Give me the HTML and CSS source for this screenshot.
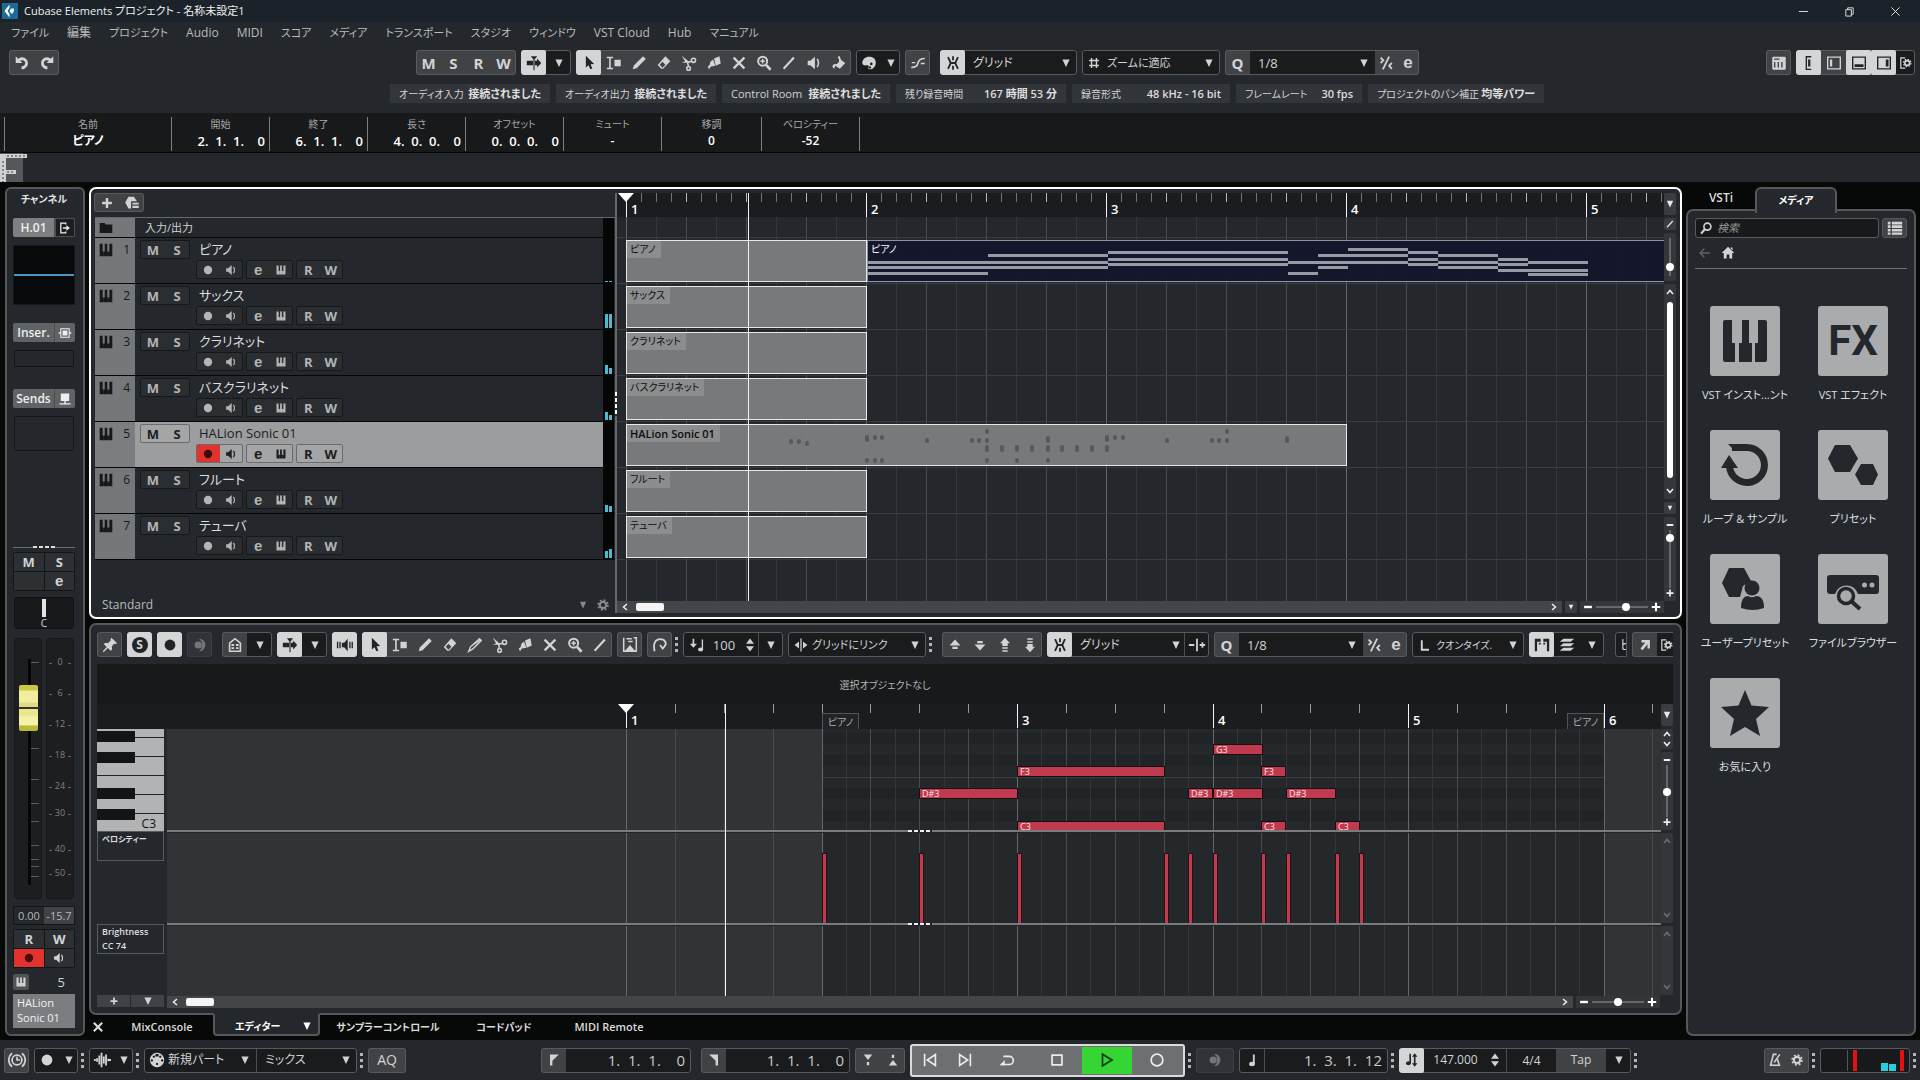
FILE: index.html
```html
<!DOCTYPE html>
<html lang="ja">
<head>
<meta charset="utf-8">
<title>Cubase Elements プロジェクト - 名称未設定1</title>
<link rel="stylesheet" href="styles.css">
</head>
<body>
<svg class="defs" aria-hidden="true">
  <symbol id="undo" viewBox="0 0 20 20"><path d="M3 2.500v7.500h7.500L8 7.600a3.400 3.400 0 1 1 1.500 6v3.200A6.600 6.600 0 1 0 5.700 5.200z"/></symbol>
  <symbol id="redo" viewBox="0 0 20 20"><path d="M17 2.500v7.500H9.500L12 7.600a3.400 3.400 0 1 0-1.500 6v3.200a6.600 6.600 0 1 1 3.800-11.600z"/></symbol>
  <symbol id="autoscroll" viewBox="0 0 20 20"><path d="M2 7.500h7v5H2zM11 7.500h2.500V5l4.500 5-4.500 5v-2.500H11zM6.500 2.500h7L10.600 6v12H9.400V6z"/></symbol>
  <symbol id="down" viewBox="0 0 20 20"><path d="M5.500 5.500h9L10 15z"/></symbol>
  <symbol id="arrow" viewBox="0 0 20 20"><path d="M6.500 2v13l3-2.600 2 4.600 2.200-1-2-4.500 4-.3z"/></symbol>
  <symbol id="range" viewBox="0 0 20 20"><path d="M2 3h7v1.600H6.400v10.800H9V17H2v-1.600h2.600V4.600H2zM10.500 6.500h7v7h-7z"/></symbol>
  <symbol id="pencil" viewBox="0 0 20 20"><path d="M3 17l1.300-4.300L14.500 2.500 17.500 5.500 7.300 15.700z"/></symbol>
  <symbol id="pen" viewBox="0 0 20 20"><path d="M3 17l2-5L15 3l2 2-9 9z" fill="none" stroke="currentColor" stroke-width="1.500"/><path d="M6 12l9-8.500 1.500 1.500z"/></symbol>
  <symbol id="eraser" viewBox="0 0 20 20"><path d="M11.500 2.500l5.500 5.500-8 8.500H7l-4-4.200zM5.300 12l3 3.200L11.500 12 8.300 8.700z" fill-rule="evenodd"/></symbol>
  <symbol id="cut" viewBox="0 0 20 20"><g fill="none" stroke="currentColor" stroke-width="1.700"><path d="M8 9.500L13 8M8.500 9.500l1 5"/><circle cx="15" cy="7" r="2.300"/><circle cx="9.500" cy="16" r="2"/></g><path d="M2 2l8 6.500-1.500 2L6 9zM2 9.500l6-2 1 2.500z"/></symbol>
  <symbol id="glue" viewBox="0 0 20 20"><path d="M10 5l6-2.500 1.500 8L12 13zM9 6l2.500 7-5 1-2 3L3 14l2-1.500 1-4z"/></symbol>
  <symbol id="mute" viewBox="0 0 20 20"><path d="M4 4l12 12M16 4L4 16" stroke="currentColor" stroke-width="2.500"/></symbol>
  <symbol id="zoom" viewBox="0 0 20 20"><g fill="none" stroke="currentColor"><circle cx="8.500" cy="8" r="5" stroke-width="2.200"/><path d="M12.300 12l5 5.500" stroke-width="3"/><path d="M6 8h5M8.500 5.500v5" stroke-width="1.700"/></g></symbol>
  <symbol id="line" viewBox="0 0 20 20"><path d="M4 16.500L15.500 4" stroke="currentColor" stroke-width="2.400"/></symbol>
  <symbol id="speaker" viewBox="0 0 20 20"><path d="M3 7.500h3L11 3v14l-5-4.500H3z"/><path d="M13.500 5.500q3 4.500 0 9" fill="none" stroke="currentColor" stroke-width="1.700"/></symbol>
  <symbol id="bucket" viewBox="0 0 20 20"><path d="M10 5l7 5-6 6.500-7-4.500q4 0 6-3zM3 15q-1-4 3-4L5 16zM8.500 3.500l2-1.500 2 5-1.500.5z"/></symbol>
  <symbol id="palette" viewBox="0 0 20 20"><path d="M10 3c5 0 8 3 7.500 7.500-.5 4-3.500 6.500-6.500 6.500-2 0-2-1.500-1.500-2.500.5-1.500 0-2.500-2-2-2.500.5-5 0-5-2.500C2.500 6 6 3 10 3zm2.500 6.500a1.500 1.500 0 1 0 .1 0zm-1.500 4a1.300 1.300 0 1 0 .1 0z" fill-rule="evenodd"/></symbol>
  <symbol id="curve" viewBox="0 0 20 20"><path d="M2.500 15Q9 15 10 10T17.500 5" fill="none" stroke="currentColor" stroke-width="1.800"/><path d="M3 9.500h4M13 10.500h4.500" stroke="currentColor" stroke-width="1.500"/></symbol>
  <symbol id="snap" viewBox="0 0 20 20"><path d="M4.500 3.500L7.500 10l-3 6.500M15.500 3.500L12.500 10l3 6.500M10 2.500v4.500M10 13v4.500M7 10h6" fill="none" stroke="currentColor" stroke-width="2"/></symbol>
  <symbol id="hash" viewBox="0 0 20 20"><path d="M6.500 3v14M13.500 3v14M3 6.500h14M3 13.500h14" stroke="currentColor" stroke-width="2"/></symbol>
  <symbol id="swing" viewBox="0 0 20 20"><path d="M13.500 3L6.500 17M4 4l3 3-3 3M16.500 10l-3 3 3 3.500" fill="none" stroke="currentColor" stroke-width="2"/></symbol>
  <symbol id="kbd" viewBox="0 0 20 20"><path d="M4 3h12a1.500 1.500 0 0 1 1.500 1.500V16A1.500 1.500 0 0 1 16 17.500H4A1.500 1.500 0 0 1 2.500 16V4.500A1.500 1.500 0 0 1 4 3zm.5 2v1.500h6V5zm0 4v6h1.500V9zm4 0v6H10V9zm4 0v6H14V9z" fill-rule="evenodd"/></symbol>
  <symbol id="zleft1" viewBox="0 0 20 20"><path d="M12.500 3H7v14h5.500" fill="none" stroke="currentColor" stroke-width="1.500"/><path d="M9 6h2.500v8H9z"/></symbol>
  <symbol id="zleft" viewBox="0 0 20 20"><path d="M3 3.500h14v13H3z" fill="none" stroke="currentColor" stroke-width="1.500"/><path d="M5.500 6H8v8H5.500z"/></symbol>
  <symbol id="zlow" viewBox="0 0 20 20"><path d="M3 3.500h14v13H3z" fill="none" stroke="currentColor" stroke-width="1.500"/><path d="M5 11.500h10v3H5z"/></symbol>
  <symbol id="zright" viewBox="0 0 20 20"><path d="M3 3.500h14v13H3z" fill="none" stroke="currentColor" stroke-width="1.500"/><path d="M12 6h3v8h-3z"/></symbol>
  <symbol id="setup" viewBox="0 0 20 20"><path d="M9 3.500H3.500v13H9" fill="none" stroke="currentColor" stroke-width="1.500"/><circle cx="11.500" cy="10" r="3" fill="none" stroke="currentColor" stroke-width="2"/><circle cx="11.500" cy="10" r="4.600" fill="none" stroke="currentColor" stroke-width="1.600" stroke-dasharray="1.800 1.800"/></symbol>
  <symbol id="gear" viewBox="0 0 20 20"><circle cx="10" cy="10" r="4.500" fill="none" stroke="currentColor" stroke-width="3"/><circle cx="10" cy="10" r="7" fill="none" stroke="currentColor" stroke-width="2.400" stroke-dasharray="2.750 2.750"/></symbol>
  <symbol id="plus" viewBox="0 0 20 20"><path d="M10 3v14M3 10h14" stroke="currentColor" stroke-width="3.500"/></symbol>
  <symbol id="minus" viewBox="0 0 20 20"><path d="M3.500 10h13" stroke="currentColor" stroke-width="4"/></symbol>
  <symbol id="preset" viewBox="0 0 20 20"><path d="M6 3h6l3.500 5H9v8H6L2.500 9.500z"/><path d="M10.500 9.700h7v2h-7zM10.500 13h7v2.500h-7z"/></symbol>
  <symbol id="folder" viewBox="0 0 20 20"><path d="M1 3h7l1.500 2H19v12H1z"/></symbol>
  <symbol id="piano" viewBox="0 0 20 20"><path d="M1 1h4.200v11h1.500v7H1zM8.200 1h3.600v11h1.500v7H6.900v-7h1.300zM14.800 1H19v18h-5.500v-7h1.300z"/></symbol>
  <symbol id="rec" viewBox="0 0 20 20"><circle cx="10" cy="10" r="6"/></symbol>
  <symbol id="exit" viewBox="0 0 20 20"><path d="M11 5V3H4v14h7v-2M7 10h7" fill="none" stroke="currentColor" stroke-width="1.800"/><path d="M12 6l5 4-5 4z"/></symbol>
  <symbol id="insert" viewBox="0 0 20 20"><path d="M4 4h12v12H4z" fill="none" stroke="currentColor" stroke-width="1.500"/><path d="M6.500 6.500h7v7h-7zM1 9h3v2H1zM16 9h3v2h-3z"/></symbol>
  <symbol id="send" viewBox="0 0 20 20"><path d="M4 2h12v11H4zM9 13h2v3H9zM2 16h16v2H2z"/></symbol>
  <symbol id="pin" viewBox="0 0 20 20"><path d="M11.500 2l6.500 6-2 1-1.500-.3-2.500 3 .3 3.300-1.500 1.500-3.300-3.200L3 18l-1-1 4.300-4.800L3 9l1.500-1.300 3.500.2 2.800-2.800-.3-1.600z"/></symbol>
  <symbol id="moon" viewBox="0 0 20 20"><circle cx="8" cy="10" r="4"/><path d="M9 3a7 7 0 0 1 0 14 9 9 0 0 0 0-14z"/></symbol>
  <symbol id="house" viewBox="0 0 20 20"><path d="M4 8l6-5 6 5v9H4z" fill="none" stroke="currentColor" stroke-width="1.800"/><path d="M6 9h3v2H6zM11 9h3v2h-3zM6 12.500h3v2H6zM11 12.500h3v2h-3z"/></symbol>
  <symbol id="feedback" viewBox="0 0 20 20"><path d="M6.500 7.500H9L13 3v14l-4-4.500H6.500zM1 6.500h1.500v7H1zM3.700 6.500h1.500v7H3.700zM14.700 6.500h1.500v7h-1.500zM17.300 6.500h1.500v7h-1.500z"/></symbol>
  <symbol id="edparts" viewBox="0 0 20 20"><path d="M3 2v15h14V2H14M6 3h6M8 6h5" fill="none" stroke="currentColor" stroke-width="1.700"/><path d="M4 17l6-7 6 7z"/></symbol>
  <symbol id="ghost" viewBox="0 0 20 20"><path d="M4 17C2 8 5 3.500 10 3.500c6 0 8 5 5 8l-2 2.500-3-4" fill="none" stroke="currentColor" stroke-width="2"/></symbol>
  <symbol id="velnote" viewBox="0 0 20 20"><path d="M6 3v7" stroke="currentColor" stroke-width="1.800"/><path d="M2 8.500h8L6 13z"/><path d="M16 4v11" stroke="currentColor" stroke-width="1.500"/><ellipse cx="14" cy="15" rx="2.800" ry="2.200"/></symbol>
  <symbol id="spin" viewBox="0 0 20 20"><path d="M10 2l5 6.500H5zM10 18l5-6.500H5z"/></symbol>
  <symbol id="link" viewBox="0 0 20 20"><path d="M9.200 2h1.600v16H9.200zM7.500 5.500v9L2 10zM12.500 5.500v9L18 10z"/></symbol>
  <symbol id="up1" viewBox="0 0 20 20"><path d="M10 4l6 6.500H4zM7 12h6v2.500H7z"/></symbol>
  <symbol id="dn1" viewBox="0 0 20 20"><path d="M10 16L4 9.500h12zM7 5.500h6V8H7z"/></symbol>
  <symbol id="up2" viewBox="0 0 20 20"><path d="M10 2l5.500 6H13v3H7V8H4.500zM7 12.500h6v1.800H7zM7 15.700h6v1.800H7z"/></symbol>
  <symbol id="dn2" viewBox="0 0 20 20"><path d="M10 18l5.500-6H13V9H7v3H4.500zM7 5.700h6v1.800H7zM7 2.500h6v1.800H7z"/></symbol>
  <symbol id="nudge" viewBox="0 0 20 20"><path d="M1 10h6M13 10h6M16 7v6M10 3v14" stroke="currentColor" stroke-width="2"/></symbol>
  <symbol id="len" viewBox="0 0 20 20"><path d="M6 4v12h9" fill="none" stroke="currentColor" stroke-width="2.400"/></symbol>
  <symbol id="parts" viewBox="0 0 20 20"><path d="M2 3h6.500v3.500H4.500V17H2zM11.500 3H18v14h-2.500V6.500h-4zM6.500 7.500h2v2h-2zM11.500 7.500h2v2h-2z"/></symbol>
  <symbol id="layers" viewBox="0 0 20 20"><path d="M6 3h12l-4 3.500H2zM6 8h12l-4 3.500H2zM6 13h12l-4 3.500H2z"/></symbol>
  <symbol id="open" viewBox="0 0 20 20"><path d="M5 3h12v12h-3.500V9l-7 8.500-3-2.500L10.500 6.500H5z"/></symbol>
  <symbol id="search" viewBox="0 0 20 20"><circle cx="12" cy="8" r="5" fill="none" stroke="currentColor" stroke-width="2.300"/><path d="M8.500 11.500L3 18" stroke="currentColor" stroke-width="3"/></symbol>
  <symbol id="list" viewBox="0 0 20 20"><path d="M2 3h3v3H2zM6.500 3H18v3H6.500zM2 7h3v3H2zM6.500 7H18v3H6.500zM2 11h3v3H2zM6.500 11H18v3H6.500zM2 15h3v2.500H2zM6.500 15H18v2.500H6.500z"/></symbol>
  <symbol id="back" viewBox="0 0 20 20"><path d="M9 4l-6 6 6 6M3 10h14" fill="none" stroke="currentColor" stroke-width="2"/></symbol>
  <symbol id="home" viewBox="0 0 20 20"><path d="M10 1l9 9h-3v8h-4v-6H8v6H4v-8H1zM14 2h2.500v4L14 4z"/></symbol>
  <symbol id="close" viewBox="0 0 20 20"><path d="M4 4l12 12M16 4L4 16" stroke="currentColor" stroke-width="3"/></symbol>
  <symbol id="clock" viewBox="0 0 20 20"><g fill="none" stroke="currentColor" stroke-width="1.900"><circle cx="10" cy="10" r="5.500"/><path d="M10 6.500V10h3.500M4.500 2.500a9.500 9.500 0 0 0 0 15M15.500 2.500a9.500 9.500 0 0 1 0 15"/></g></symbol>
  <symbol id="wave" viewBox="0 0 20 20"><path d="M1 10h2M4.500 8v4M7 5v10M9.500 2v16M12 6v8M14.500 4v12M17 8.500v3M18 10h2" stroke="currentColor" stroke-width="2"/></symbol>
  <symbol id="midi" viewBox="0 0 20 20"><path d="M10 1a9 9 0 1 0 .1 0zM8 2.500h4v3H8zM3.500 9a1.500 1.500 0 1 0 .1 0zM16.500 9a1.500 1.500 0 1 0 .1 0zM6 4.500a1.400 1.400 0 1 0 .1 0zM14 4.500a1.400 1.400 0 1 0 .1 0zM10 13.500a1.400 1.400 0 1 0 .1 0z" fill-rule="evenodd"/></symbol>
  <symbol id="lloc" viewBox="0 0 20 20"><path d="M5 3h11L8 11v6H5z"/></symbol>
  <symbol id="rloc" viewBox="0 0 20 20"><path d="M15 3H4l8 8v6h3z"/></symbol>
  <symbol id="punchin" viewBox="0 0 20 20"><path d="M4 2h12l-6 8zM8.300 13h3.400v4.500H8.300z"/></symbol>
  <symbol id="punchout" viewBox="0 0 20 20"><path d="M4 18h12l-6-8zM8.300 2.500h3.400V7H8.300z"/></symbol>
  <symbol id="tostart" viewBox="0 0 20 20"><path d="M4 3v14M16 4v12L7 10z" fill="none" stroke="currentColor" stroke-width="1.800"/></symbol>
  <symbol id="toend" viewBox="0 0 20 20"><path d="M16 3v14M4 4v12l9-6z" fill="none" stroke="currentColor" stroke-width="1.800"/></symbol>
  <symbol id="cycle" viewBox="0 0 20 20"><path d="M6 6h6.500a4.500 4.500 0 0 1 0 9H3" fill="none" stroke="currentColor" stroke-width="1.800"/><path d="M2 15.800L7.500 10v5.800z"/></symbol>
  <symbol id="stop" viewBox="0 0 20 20"><path d="M4.500 4.500h11v11h-11z" fill="none" stroke="currentColor" stroke-width="1.900"/></symbol>
  <symbol id="play" viewBox="0 0 20 20"><path d="M5 3.500v13L15.500 10z" fill="none" stroke="currentColor" stroke-width="1.900"/></symbol>
  <symbol id="record" viewBox="0 0 20 20"><circle cx="10" cy="10" r="6.500" fill="none" stroke="currentColor" stroke-width="1.900"/></symbol>
  <symbol id="note" viewBox="0 0 20 20"><path d="M11 4h2v11h-2z"/><ellipse cx="10" cy="14.500" rx="3.200" ry="2.500"/></symbol>
  <symbol id="tempo" viewBox="0 0 20 20"><path d="M8 3v10M13 5v10" stroke="currentColor" stroke-width="1.800"/><ellipse cx="6" cy="13.500" rx="2.700" ry="2.200"/><path d="M10 13.500h6l-3 4zM10 6.500h6l-3-4z"/></symbol>
  <symbol id="metro" viewBox="0 0 20 20"><path d="M7 3h5M8 3L4.500 16.500h11L13 9" fill="none" stroke="currentColor" stroke-width="2"/><path d="M9 13l7-10" stroke="currentColor" stroke-width="2"/></symbol>
  <symbol id="cup" viewBox="0 0 20 20"><path d="M4 14l6-7 6 7" fill="none" stroke="currentColor" stroke-width="3"/></symbol>
  <symbol id="cdn" viewBox="0 0 20 20"><path d="M4 6l6 7 6-7" fill="none" stroke="currentColor" stroke-width="3"/></symbol>
  <symbol id="cleft" viewBox="0 0 20 20"><path d="M14 4l-7 6 7 6" fill="none" stroke="currentColor" stroke-width="3"/></symbol>
  <symbol id="cright" viewBox="0 0 20 20"><path d="M6 4l7 6-7 6" fill="none" stroke="currentColor" stroke-width="3"/></symbol>
</svg>

<header class="titlebar">
  <svg class="logo" viewBox="0 0 16 16"><rect width="16" height="16" fill="#1c6a96"/><path d="M7.500 1.500L2.500 8l5 6.500V11L5.500 8l2-3z" fill="#fff"/><path d="M9 5.500h3V8l-1.500 2.500H9L7.500 8z" fill="#e8f3f8"/></svg>
  <h1>Cubase Elements プロジェクト - 名称未設定1</h1>
  <div class="winbtns">
    <button aria-label="最小化"><svg viewBox="0 0 12 12"><path d="M1 6h10"/></svg></button>
    <button aria-label="元のサイズ"><svg viewBox="0 0 12 12"><path d="M2 4h6v7H2zM4 4V2h6v7H8"/></svg></button>
    <button aria-label="閉じる"><svg viewBox="0 0 12 12"><path d="M1.500 1.500l9 9M10.500 1.500l-9 9"/></svg></button>
  </div>
</header>
<nav class="menu">
  <button>ファイル</button><button class="kanji">編集</button><button>プロジェクト</button><button class="latin">Audio</button><button class="latin">MIDI</button><button>スコア</button><button>メディア</button><button>トランスポート</button><button>スタジオ</button><button>ウィンドウ</button><button class="latin">VST Cloud</button><button class="latin">Hub</button><button>マニュアル</button>
</nav>

<div class="toolbar top">
  <div class="grp history"><button class="b" aria-label="元に戻す"><svg class="ic"><use href="#undo"/></svg></button><button class="b" aria-label="やり直す"><svg class="ic"><use href="#redo"/></svg></button></div>
  <div class="grp"><button class="b t">M</button><button class="b t">S</button><button class="b t">R</button><button class="b t">W</button></div>
  <div class="grp"><button class="b on"><svg class="ic"><use href="#autoscroll"/></svg></button><button class="b dark"><svg class="ic sm"><use href="#down"/></svg></button></div>
  <div class="grp"><button class="b on"><svg class="ic"><use href="#arrow"/></svg></button><button class="b"><svg class="ic"><use href="#range"/></svg></button><button class="b"><svg class="ic"><use href="#pencil"/></svg></button><button class="b"><svg class="ic"><use href="#eraser"/></svg></button><button class="b"><svg class="ic"><use href="#cut"/></svg></button><button class="b"><svg class="ic"><use href="#glue"/></svg></button><button class="b"><svg class="ic"><use href="#mute"/></svg></button><button class="b"><svg class="ic"><use href="#zoom"/></svg></button><button class="b"><svg class="ic"><use href="#line"/></svg></button><button class="b"><svg class="ic"><use href="#speaker"/></svg></button><button class="b"><svg class="ic"><use href="#bucket"/></svg></button></div>
  <div class="grp dark"><button class="b"><svg class="ic"><use href="#palette"/></svg></button><button class="b slim"><svg class="ic sm"><use href="#down"/></svg></button></div>
  <div class="grp"><button class="b"><svg class="ic"><use href="#curve"/></svg></button></div>
  <div class="grp dark snapgrp"><button class="b on"><svg class="ic"><use href="#snap"/></svg></button><label class="sel"><select aria-label="スナップ"><option>グリッド</option></select><svg class="ic sm"><use href="#down"/></svg></label></div>
  <div class="grp dark zoomgrp"><label class="sel"><svg class="ic md"><use href="#hash"/></svg><select aria-label="グリッドの間隔"><option>ズームに適応</option></select><svg class="ic sm"><use href="#down"/></svg></label></div>
  <div class="grp qgrp"><button class="b t">Q</button><label class="sel dark"><select class="num" aria-label="クオンタイズ"><option>1/8</option></select><svg class="ic sm"><use href="#down"/></svg></label><button class="b half"><svg class="ic"><use href="#swing"/></svg></button><button class="b half e">e</button></div>
  <div class="grp pushright"><button class="b"><svg class="ic"><use href="#kbd"/></svg></button></div>
  <div class="grp"><button class="b on"><svg class="ic"><use href="#zleft1"/></svg></button><button class="b"><svg class="ic"><use href="#zleft"/></svg></button><button class="b on"><svg class="ic"><use href="#zlow"/></svg></button><button class="b on"><svg class="ic"><use href="#zright"/></svg></button><button class="b dark slim"><svg class="ic sm"><use href="#setup"/></svg></button></div>
</div>

<dl class="status">
  <div><dt>オーディオ入力</dt><dd>接続されました</dd></div>
  <div><dt>オーディオ出力</dt><dd>接続されました</dd></div>
  <div><dt class="latin">Control Room</dt><dd>接続されました</dd></div>
  <div><dt>残り録音時間</dt><dd>167 時間 53 分</dd></div>
  <div><dt>録音形式</dt><dd>48 kHz - 16 bit</dd></div>
  <div><dt>フレームレート</dt><dd>30 fps</dd></div>
  <div><dt>プロジェクトのパン補正</dt><dd>均等パワー</dd></div>
</dl>

<dl class="infoline">
  <div class="wide"><dt>名前</dt><dd>ピアノ</dd></div>
  <div class="num"><dt>開始</dt><dd>2.  1.  1.    0</dd></div>
  <div class="num"><dt>終了</dt><dd>6.  1.  1.    0</dd></div>
  <div class="num"><dt>長さ</dt><dd>4.  0.  0.    0</dd></div>
  <div class="num"><dt>オフセット</dt><dd>0.  0.  0.    0</dd></div>
  <div><dt>ミュート</dt><dd>-</dd></div>
  <div class="trans"><dt>移調</dt><dd>0</dd></div>
  <div><dt>ベロシティー</dt><dd>-52</dd></div>
</dl>
<div class="overview"><svg viewBox="0 0 28 29"><path d="M0 0h23v29H0z" fill="#55575a"/><path d="M0 1h6v28H0zM6 1h21v4H6zM6 17h10v4H6z" fill="#cfd0d1"/><path d="M3 8v21M7 3h18M7 19h7" fill="none" stroke="#85878a" stroke-width="2" stroke-dasharray="2 2"/></svg></div>

<main class="workspace">
  <aside class="channel">
    <h2>チャンネル</h2>
    <div class="chhead grow1"><button>H.01</button><button class="out" aria-label="出力"><svg class="ic md"><use href="#exit"/></svg></button></div>
    <div class="eq"></div>
    <div class="chhead"><button>Inser.</button><button aria-label="インサート"><svg class="ic md"><use href="#insert"/></svg></button></div>
    <div class="slot"></div>
    <div class="chhead"><button>Sends</button><button aria-label="センド"><svg class="ic md"><use href="#send"/></svg></button></div>
    <div class="slot tall"></div>
    <div class="split"></div>
    <div class="cells"><button>M</button><button>S</button><span></span><button class="e">e</button></div>
    <div class="pan"><i></i><span>C</span></div>
    <div class="faders">
      <div class="fader"><span class="fticks" id="fticks"></span><input type="range" min="0" max="100" value="85" aria-label="音量"></div>
      <div class="meter" id="meter"></div>
    </div>
    <div class="vals"><span>0.00</span><span>-15.7</span></div>
    <div class="cells rw"><button>R</button><button>W</button><button class="recon" aria-label="録音可能"><svg class="ic md"><use href="#rec"/></svg></button><button aria-label="モニター"><svg class="ic md"><use href="#speaker"/></svg></button></div>
    <div class="chno"><span class="kb"><svg class="ic xs"><use href="#piano"/></svg></span><span>5</span></div>
    <div class="chname">HALion<br>Sonic 01</div>
  </aside>

  <section class="center">
    <div class="project">
      <div class="tracklist">
        <div class="tlhead"><div class="grp small"><button class="b" aria-label="トラックを追加"><svg class="ic md"><use href="#plus"/></svg></button><button class="b" aria-label="プリセットを使用"><svg class="ic"><use href="#preset"/></svg></button></div></div>
        <div class="iorow"><span class="col"><svg class="ic md"><use href="#folder"/></svg></span><span class="ioname">入力/出力</span><span class="lvl"></span></div>
        <div id="tracks"></div>
        <div class="tlfoot"><span>Standard</span><svg class="ic md"><use href="#down"/></svg><svg class="ic md"><use href="#gear"/></svg></div>
      </div>
      <div class="divider"></div>
      <div class="timeline">
        <div class="ruler" id="ruler1"></div>
        <div class="lanes" id="lanes"></div>
        <div class="hbar"><div class="hscroll"><svg class="ic xs"><use href="#cleft"/></svg><i></i><svg class="ic xs end"><use href="#cright"/></svg></div><button class="mini" aria-label="ズームメニュー"><svg class="ic xs"><use href="#down"/></svg></button><div class="hzoom"><svg class="ic xs"><use href="#minus"/></svg><input type="range" value="60" aria-label="横ズーム"><svg class="ic xs"><use href="#plus"/></svg></div></div>
        <span class="playhead" id="ph1"></span>
      </div>
      <div class="vcol">
        <button class="mini rulerbtn" aria-label="ルーラーメニュー"><svg class="ic md"><use href="#down"/></svg></button>
        <button class="mini" aria-label="編集"><svg class="ic xs"><use href="#line"/></svg></button>
        <div class="vbox wavezoom"><input class="v" type="range" value="17" aria-label="波形ズーム"></div>
        <div class="vbox vscroll"><svg class="ic xs"><use href="#cup"/></svg><i></i><svg class="ic xs"><use href="#cdn"/></svg></div>
        <button class="mini" aria-label="縦ズームメニュー"><svg class="ic xs"><use href="#down"/></svg></button>
        <div class="vbox vzoom"><svg class="ic xs"><use href="#minus"/></svg><input class="v" type="range" value="92" aria-label="縦ズーム"><svg class="ic xs"><use href="#plus"/></svg></div>
      </div>
    </div>

    <div class="lower">
      <div class="toolbar ed">
        <div class="grp"><button class="b"><svg class="ic"><use href="#pin"/></svg></button></div>
        <div class="grp"><button class="b on"><span class="solo">S</span></button></div>
        <div class="grp"><button class="b on"><svg class="ic"><use href="#rec"/></svg></button></div>
        <div class="grp dim"><button class="b"><svg class="ic"><use href="#moon"/></svg></button></div>
        <div class="grp gapl"><button class="b"><svg class="ic"><use href="#house"/></svg></button><button class="b dark"><svg class="ic sm"><use href="#down"/></svg></button></div>
        <div class="grp"><button class="b on"><svg class="ic"><use href="#autoscroll"/></svg></button><button class="b dark"><svg class="ic sm"><use href="#down"/></svg></button></div>
        <div class="grp"><button class="b on"><svg class="ic"><use href="#feedback"/></svg></button></div>
        <div class="grp"><button class="b on"><svg class="ic"><use href="#arrow"/></svg></button><button class="b"><svg class="ic"><use href="#range"/></svg></button><button class="b"><svg class="ic"><use href="#pencil"/></svg></button><button class="b"><svg class="ic"><use href="#eraser"/></svg></button><button class="b"><svg class="ic"><use href="#pen"/></svg></button><button class="b"><svg class="ic"><use href="#cut"/></svg></button><button class="b"><svg class="ic"><use href="#glue"/></svg></button><button class="b"><svg class="ic"><use href="#mute"/></svg></button><button class="b"><svg class="ic"><use href="#zoom"/></svg></button><button class="b"><svg class="ic"><use href="#line"/></svg></button></div>
        <div class="grp"><button class="b"><svg class="ic"><use href="#edparts"/></svg></button></div>
        <div class="grp"><button class="b"><svg class="ic"><use href="#ghost"/></svg></button></div>
        <span class="dots"></span>
        <div class="grp dark velgrp"><svg class="ic"><use href="#velnote"/></svg><input type="text" value="100" aria-label="ベロシティー"><svg class="ic sm"><use href="#spin"/></svg><button class="b ldiv"><svg class="ic sm"><use href="#down"/></svg></button></div>
        <div class="grp dark linkgrp"><label class="sel"><svg class="ic sm"><use href="#link"/></svg><select aria-label="グリッドリンク"><option>グリッドにリンク</option></select><svg class="ic sm"><use href="#down"/></svg></label></div>
        <span class="dots"></span>
        <div class="grp gapl"><button class="b"><svg class="ic"><use href="#up1"/></svg></button><button class="b"><svg class="ic"><use href="#dn1"/></svg></button><button class="b"><svg class="ic"><use href="#up2"/></svg></button><button class="b"><svg class="ic"><use href="#dn2"/></svg></button></div>
        <div class="grp dark edsnap"><button class="b on"><svg class="ic"><use href="#snap"/></svg></button><label class="sel"><select aria-label="スナップタイプ"><option>グリッド</option></select><svg class="ic sm"><use href="#down"/></svg></label><button class="b ldiv"><svg class="ic"><use href="#nudge"/></svg></button></div>
        <div class="grp edq"><button class="b t">Q</button><label class="sel dark"><select class="num" aria-label="クオンタイズ値"><option>1/8</option></select><svg class="ic sm"><use href="#down"/></svg></label><button class="b half"><svg class="ic"><use href="#swing"/></svg></button><button class="b half e">e</button></div>
        <div class="grp dark lengrp"><label class="sel"><svg class="ic sm"><use href="#len"/></svg><select aria-label="長さクオンタイズ"><option>クオンタイズ.</option></select><svg class="ic sm"><use href="#down"/></svg></label></div>
        <div class="grp dark"><button class="b on"><svg class="ic"><use href="#parts"/></svg></button><button class="b"><svg class="ic"><use href="#layers"/></svg></button><button class="b"><svg class="ic sm"><use href="#down"/></svg></button></div>
        <div class="grp dark clipped">ピ</div>
        <div class="grp last"><button class="b"><svg class="ic md"><use href="#open"/></svg></button><button class="b slim dark"><svg class="ic sm"><use href="#setup"/></svg></button></div>
      </div>
      <div class="edinfo">選択オブジェクトなし</div>
      <div class="editor">
        <div class="edleft">
          <div class="corner"></div>
          <div class="keys" id="keys"></div>
          <div class="lanelabel one">ベロシティー</div>
          <div class="lanelabel two">Brightness<br>CC 74</div>
          <div class="laneadd"><button aria-label="レーンを追加"><svg class="ic xs"><use href="#plus"/></svg></button><button aria-label="レーン設定"><svg class="ic sm"><use href="#down"/></svg></button></div>
        </div>
        <div class="edmain">
          <div class="ruler" id="ruler2"></div>
          <div class="pane roll" id="roll"></div>
          <div class="psplit"></div>
          <div class="pane vel" id="vel"></div>
          <div class="psplit"></div>
          <div class="pane cc" id="cc"></div>
          <div class="hbar"><div class="hscroll ehs"><svg class="ic xs"><use href="#cleft"/></svg><i></i><svg class="ic xs end"><use href="#cright"/></svg></div><div class="hzoom"><svg class="ic xs"><use href="#minus"/></svg><input type="range" value="50" aria-label="エディター横ズーム"><svg class="ic xs"><use href="#plus"/></svg></div></div>
          <span class="playhead thick" id="ph2"></span>
        </div>
        <div class="vcol ev">
          <button class="mini rulerbtn" aria-label="エディタールーラー"><svg class="ic md"><use href="#down"/></svg></button>
          <div class="vbox updn"><svg class="ic xs"><use href="#cup"/></svg><svg class="ic xs"><use href="#cdn"/></svg></div>
          <div class="vbox ezoom"><svg class="ic xs"><use href="#minus"/></svg><input class="v" type="range" value="48" aria-label="エディター縦ズーム"><svg class="ic xs"><use href="#plus"/></svg></div>
          <div class="vbox faint v1"><svg class="ic xs"><use href="#cup"/></svg><svg class="ic xs"><use href="#cdn"/></svg></div>
          <div class="vbox faint v2"><svg class="ic xs"><use href="#cup"/></svg><svg class="ic xs"><use href="#cdn"/></svg></div>
        </div>
      </div>
    </div>
    <div class="tabs"><button class="x" aria-label="閉じる"><svg class="ic md"><use href="#close"/></svg></button><button class="mix">MixConsole</button><button class="active"><span>エディター</span><svg class="ic sm"><use href="#down"/></svg></button><button class="smp">サンプラーコントロール</button><button class="pad">コードパッド</button><button class="rem">MIDI Remote</button></div>
  </section>

  <aside class="media">
    <div class="mtabs"><button>VSTi</button><button class="active">メディア</button></div>
    <div class="mpanel">
      <div class="msearch"><label><svg class="ic md"><use href="#search"/></svg><input type="search" placeholder="検索" aria-label="検索"></label><button aria-label="表示設定"><svg class="ic"><use href="#list"/></svg></button></div>
      <div class="mnav"><button class="dis" aria-label="戻る"><svg class="ic md"><use href="#back"/></svg></button><button aria-label="ホーム"><svg class="ic md"><use href="#home"/></svg></button></div>
      <div class="tiles">
        <button><span class="tile"><svg viewBox="0 0 70 70"><path d="M13 16a2 2 0 0 1 2-2h7v23h3v19H15a2 2 0 0 1-2-2zM32 14h7v23h3v19H29V37h3zM48 14h7a2 2 0 0 1 2 2v38a2 2 0 0 1-2 2H45V37h3z"/></svg></span><span>VST インスト...ント</span></button>
        <button><span class="tile fx">FX</span><span>VST エフェクト</span></button>
        <button><span class="tile"><svg viewBox="0 0 70 70"><path d="M22 17.500h15a17.500 17.500 0 1 1-17.500 19" fill="none" stroke="#24282c" stroke-width="7"/><path d="M11 38l8-13 9 13zM18 14h12v7h-5z"/></svg></span><span>ループ &amp; サンプル</span></button>
        <button><span class="tile"><svg viewBox="0 0 70 70"><path d="M17 15h15l8 13.500L32 42H17l-7-13.500zM43 34h12l5 10.500L55 55H43l-6-10.500z"/></svg></span><span>プリセット</span></button>
        <button><span class="tile"><svg viewBox="0 0 70 70"><path d="M19 14h15l7 13-8 5-3 11H19l-7-14z"/><circle cx="42" cy="34" r="7.500"/><path d="M31 54q0-12 7-12 4 2.500 8 0 8 0 8 12-11 4-23 0z"/></svg></span><span>ユーザープリセット</span></button>
        <button><span class="tile"><svg viewBox="0 0 70 70"><path d="M12 21h46a3 3 0 0 1 3 3v13a3 3 0 0 1-3 3H40a12 12 0 0 0-23 0h-5a3 3 0 0 1-3-3V24a3 3 0 0 1 3-3z"/><circle cx="46.500" cy="31" r="2.500" fill="#a9abad"/><circle cx="54" cy="31" r="2.500" fill="#a9abad"/><circle cx="28" cy="42" r="7.500" fill="none" stroke="#24282c" stroke-width="3.500"/><path d="M33 47l9 8" stroke="#24282c" stroke-width="4"/></svg></span><span>ファイルブラウザー</span></button>
        <button><span class="tile"><svg viewBox="0 0 70 70"><path d="M35 12l6.500 15.500L59 29 46 41l4 17-15-9-15 9 4-17L11 29l17.500-1.500z"/></svg></span><span>お気に入り</span></button>
      </div>
    </div>
  </aside>
</main>

<footer class="transport">
  <div class="grp"><button class="b"><svg class="ic"><use href="#clock"/></svg></button></div>
  <div class="grp dark g44"><button class="b"><svg class="ic"><use href="#rec"/></svg></button><button class="b slim"><svg class="ic sm"><use href="#down"/></svg></button></div><span class="dots"></span>
  <div class="grp dark g44"><button class="b"><svg class="ic"><use href="#wave"/></svg></button><button class="b slim"><svg class="ic sm"><use href="#down"/></svg></button></div><span class="dots"></span>
  <div class="grp dark recmode"><label class="sel"><svg class="ic sm"><use href="#midi"/></svg><select aria-label="MIDI録音モード"><option>新規パート</option></select><svg class="ic sm"><use href="#down"/></svg></label><label class="sel ldiv"><select aria-label="サイクルモード"><option>ミックス</option></select><svg class="ic sm"><use href="#down"/></svg></label></div><span class="dots"></span>
  <div class="grp"><button class="b aq">AQ</button></div>
  <div class="grp dark loc first"><button class="b gray"><svg class="ic sm"><use href="#lloc"/></svg></button><span class="time">1.  1.  1.    0</span></div>
  <div class="grp dark loc"><button class="b gray"><svg class="ic sm"><use href="#rloc"/></svg></button><span class="time">1.  1.  1.    0</span></div>
  <div class="grp"><button class="b"><svg class="ic md"><use href="#punchin"/></svg></button><button class="b"><svg class="ic md"><use href="#punchout"/></svg></button></div>
  <div class="play"><button aria-label="先頭へ"><svg class="ic"><use href="#tostart"/></svg></button><button aria-label="末尾へ"><svg class="ic"><use href="#toend"/></svg></button><button class="w50" aria-label="サイクル"><svg class="ic"><use href="#cycle"/></svg></button><button class="w50" aria-label="停止"><svg class="ic"><use href="#stop"/></svg></button><button class="w50 go" aria-label="再生"><svg class="ic"><use href="#play"/></svg></button><button class="w50" aria-label="録音"><svg class="ic"><use href="#record"/></svg></button></div><span class="dots"></span>
  <div class="grp dim w38"><button class="b"><svg class="ic"><use href="#moon"/></svg></button></div>
  <div class="grp dark loc"><button class="b"><svg class="ic"><use href="#note"/></svg></button><span class="time ldiv">1.  3.  1.  12</span></div><span class="dots"></span>
  <div class="grp dark tempo"><button class="b on"><svg class="ic"><use href="#tempo"/></svg></button><input type="text" value="147.000" aria-label="テンポ"><svg class="ic sm"><use href="#spin"/></svg><span class="sig">4/4</span><button class="b gray tap">Tap</button><button class="b"><svg class="ic sm"><use href="#down"/></svg></button></div><span class="dots"></span>
  <div class="grp pushright metrog"><button class="b"><svg class="ic sm"><use href="#metro"/></svg></button><button class="b"><svg class="ic md"><use href="#gear"/></svg></button></div><span class="dots"></span>
  <div class="outmeter"><i class="tick"></i><i class="red"></i><i class="cy"></i><i class="cy low"></i><i class="red"></i></div><span class="dots"></span>
</footer>
<script src="app.js"></script>
</body>
</html>
```
FILE: styles.css
```css
*{box-sizing:border-box}
body{margin:0;min-height:100vh;display:flex;flex-direction:column;background:#24282c;color:#d2d3d4;font:12px/16px "Open Sans","Noto Sans CJK JP",sans-serif;font-feature-settings:"palt";overflow-x:hidden}
button,input,select{font:inherit;color:inherit;font-feature-settings:inherit;background:none;border:0;padding:0;margin:0;border-radius:0}
button{display:flex;align-items:center;justify-content:center;white-space:nowrap}
h1,h2,dl,dd,dt{margin:0;font-weight:400}
.defs{position:absolute;width:0;height:0}
.ic{width:18px;height:18px;fill:currentColor;flex:none;display:block}
.ic.md{width:14px;height:14px}
.ic.sm{width:16px;height:16px}
.ic.xs{width:10px;height:10px}

.titlebar{height:22px;display:flex;align-items:center;padding-left:2px;background:#1b2229;color:#f0f0f0}
.logo{width:16px;height:16px;margin-right:6px}
.titlebar h1{font-size:11px;flex:1}
.winbtns{display:flex;margin-right:2px}
.winbtns button{width:46px;height:20px}
.winbtns svg{width:11px;height:11px;fill:none;stroke:#e8e8e8}
.menu{height:22px;display:flex;gap:18px;padding-left:11px;font-size:11px;align-items:center;color:#b9bbbc}
.menu .latin{font-size:12px}
.menu .kanji{font-size:12px}

.toolbar{display:flex;gap:5px}
.top{padding:6px 5px 6px 9px}
.history{margin-right:352px}
.pushright{margin-left:auto}
.grp{display:flex;align-items:stretch;height:25px;flex:none;background:#404246;outline:1px solid #585b5e;outline-offset:-1px;border-radius:3px;overflow:hidden}
.b{width:25px;flex:none}
.b.t{font-weight:700;font-size:15px}
.b.slim{width:19px}
.b.half{width:22px}
.e{font:700 17px/18px "Liberation Sans",sans-serif}
.dark{background:#191b1d}
.b.gray{background:#404246}
.b.on{background:#d4d5d6;color:#222528;position:relative;border-radius:2px}
.sel{display:flex;align-items:center;flex:1;min-width:0;padding:0 3px 0 5px}
.sel select{appearance:none;flex:1;min-width:0;font-size:12px;padding:0 4px 0 3px}
.sel select.num{font-size:13px}
.snapgrp{width:137px;margin-left:5px}
.zoomgrp{width:138px}
.zoomgrp select{font-size:11px;padding-left:6px}
.qgrp{width:194px}

.status{display:grid;grid-template-columns:160px 160px 168px 170px 158px 126px 176px;gap:6px;padding:3px 0 10px 390px}
.status>div{display:flex;justify-content:space-between;align-items:center;height:19px;padding:0 9px;background:#323539;font-size:11px;white-space:nowrap}
.status dt{font-size:10px}
.status dt.latin{font-size:11px}
.status dd{font-weight:600;color:#dedede}

.infoline{display:flex;height:40px;background:#17191b;border-bottom:1px solid #060707;padding:4px 0 1px 4px}
.infoline>div{width:98px;border-left:1px solid #7c7e80;display:flex;flex-direction:column;text-align:center}
.infoline>.wide{width:167px}
.infoline>.trans{width:100px}
.infoline>div:last-child{width:99px;border-right:1px solid #7c7e80}
.infoline dt{font-size:10px;color:#a6a8a9;line-height:14px}
.infoline dd{font-size:12px;line-height:20px;font-weight:600;color:#fff;white-space:pre}
.infoline .num dd{text-align:right;padding-right:4px;font-size:13px}
.overview{height:29px}
.overview svg{height:29px;width:28px;display:block}

.workspace{flex:1;display:flex;gap:4px;background:#070808;padding:5px 4px 4px 5px}
.channel{width:80px;flex:none;border:2px solid #55585b;border-radius:6px;background:#24282c;padding:0 8px 6px 6px;display:flex;flex-direction:column}
.channel h2{font-size:10px;line-height:20px;font-weight:600;text-align:center;color:#e2e2e2;margin:0 0 9px}
.chhead{display:flex;height:19px;flex:none;border-radius:2px;background:#606366;color:#eee;overflow:hidden;font-weight:600;margin-bottom:8px}
.chhead button:first-child{flex:1;border-right:1px solid #4b4d50}
.chhead button:last-child{width:20px}
.chhead.grow1{background:#7d8083}
.chhead .out{background:#1c1e20;border:1px solid #4c4f52}
.eq{height:60px;flex:none;margin-bottom:18px;background:linear-gradient(#0000 28px,#4d95c0 28px 30px,#0000 30px),#08090b;border:1px solid #15171a}
.slot{height:17px;flex:none;border:1px solid #121416;border-radius:2px;margin:0 1px 22px}
.slot.tall{height:35px;margin-bottom:0}
.split{flex:1;min-height:20px;background:repeating-linear-gradient(90deg,#ddd 0 4px,#24282c 4px 6px) center bottom/22px 2px no-repeat,linear-gradient(#686b6e,#686b6e) center bottom/100% 1px no-repeat;margin-bottom:4px}
.cells{display:grid;grid-template-columns:1fr 1fr;grid-auto-rows:18px;gap:1px;padding:1px;flex:none;background:#131517;border-radius:2px;font-weight:700;font-size:13px}
.cells>*{background:#2d3033}
.cells .e{font-size:15px}
.cells>.recon{background:#e0332f;color:#4a0d0b}
.pan{height:32px;margin:6px 1px 9px;background:#17191b;border:1px solid #111;border-radius:3px;display:flex;flex-direction:column;align-items:center;padding-top:1px;flex:none}
.pan i{width:4px;height:18px;flex:none;background:#e4e4e4}
.pan span{font-size:10px;line-height:12px}
.faders{display:flex;gap:4px;height:261px;flex:none;margin:0 1px 7px}
.faders>div{flex:1;background:#1d1e1f;border-radius:3px;border:1px solid #161718;position:relative}
.faders>.fader{background:linear-gradient(#050505,#050505) 13px 20px/3px 226px no-repeat #1d1e1f}
.fader input{appearance:none;writing-mode:vertical-lr;direction:rtl;position:absolute;left:4px;top:17px;width:19px;height:238px}
.fader input::-webkit-slider-thumb{appearance:none;width:19px;height:46px;border-radius:2px;background:linear-gradient(#c8c842 0 5px,#f0ee9e 6px 17px,#dcdc84 18px 22px,#333 22px 24px,#e8e68e 24px 30px,#f4f2a8 32px 40px,#b9ba36 41px)}
.fticks i{position:absolute;right:2px;width:8px;height:1px;background:#5a5c5e}
.meter span{position:absolute;left:0;right:0;text-align:center;font-size:9px;line-height:12px;color:#808284}
.meter span::before,.meter span::after{content:"";position:absolute;top:7px;width:3px;height:1px;background:#626466}
.meter span::before{left:2px}
.meter span::after{right:2px}
.vals{display:flex;height:19px;flex:none;border:1px solid #131517;font-size:11px;color:#b7b9ba;margin-bottom:4px}
.vals span{flex:1;text-align:center;line-height:17px}
.vals span:last-child{background:#404346}
.chno{display:flex;justify-content:space-between;align-items:center;height:16px;flex:none;margin:6px 10px 4px 0;font-size:13px}
.kb{background:#505356;border-radius:2px;padding:3px}
.chname{background:#7b7e81;color:#f2f2f2;font-size:11px;line-height:15px;height:34px;flex:none;padding:1px 4px}

.center{flex:1;min-width:0;display:flex;flex-direction:column}
.project{flex:1;display:grid;grid-template-columns:520px 2px 1fr 12px;border:2px solid #fff;border-radius:7px;background:#24282c;padding:4px 4px 4px;margin-bottom:4px}
.tracklist{display:flex;flex-direction:column}
.tlhead{height:25px;border-bottom:1px solid #65686b}
.grp.small{height:19px;width:50px;margin-left:-1px}
.iorow{display:flex;height:20px;border-bottom:1px solid #050606}
.col{width:40px;flex:none;background:#75787b;color:#16181a;display:flex;gap:6px;justify-content:space-between;padding:0 5px 0 4px;font-size:12px}
.col .ic{margin-top:5px}
.iorow .ic{margin-top:3px}
.ioname{flex:1;padding-left:10px;line-height:20px;font-size:11px}
.lvl{width:11px;margin-right:1px;flex:none;background:#050606;display:flex;align-items:flex-end;gap:1px;padding:0 1px 1px 2px}
.lvl i{width:3px;background:#45bdd0}
.track{display:flex;height:46px;border-bottom:1px solid #050606}
.col .no{line-height:23px}
.tbody{flex:1;display:grid;grid-template-columns:50px 1fr;grid-template-rows:20px 19px;column-gap:7px;row-gap:0;padding:2px 0 0 5px}
.bt{display:inline-flex;height:19px;border:1px solid #15171a;border-radius:2px;background:#2b2e31;color:#b3b5b6;font-weight:700;font-size:13px}
.bt button{flex:1}
.bt .e{font-size:15px}
.tname{font-size:13px;line-height:18px;padding-left:2px;color:#dcdddd}
.tbtns{grid-column:2;display:flex;gap:3px;margin-left:-1px}
.tbtns .bt{width:47px}
.track.sel5 .tbody{background:#9b9d9e}
.sel5 .tname{color:#1c1e20}
.sel5 .bt{background:#a3a5a6;color:#1c1e20;border-color:#696b6d}
.sel5 .armed{background:#e0332f;color:#3c0c0a}
.sel5 .col{background:#7b7e81}
.tlfoot{margin-top:auto;display:flex;align-items:center;gap:6px;padding:0 5px 0 7px;color:#b8babb;height:16px;font-size:12px}
.tlfoot span{flex:1}
.tlfoot .ic{color:#888b8d}
.divider{background:repeating-linear-gradient(#fff 0 4px,#24282c 4px 6px) 0 199px/2px 24px no-repeat,#65686b}
.timeline,.edmain{position:relative;display:flex;flex-direction:column;min-width:0;overflow:hidden}
.ruler{position:relative;height:24px;background:#1a1c1f;overflow:hidden;flex:none}
.ruler i{position:absolute;top:0;width:1px;height:9px;background:#6f7173}
.ruler .beat{background:#b9babb}
.ruler .bar{height:24px;background:#f4f4f4}
.ruler b{position:absolute;top:8px;font-size:13px;line-height:17px;font-weight:600;color:#fff}
.ruler .mark{position:absolute;top:0;width:0;height:0;border:8px solid transparent;border-top:9px solid #fff;border-bottom:0}
.ruler .flag{position:absolute;top:9px;height:17px;width:37px;border:1px solid #515457;border-bottom:0;background:#212427;color:#a9abac;font-size:10px;text-align:center}
.lanes{flex:1;position:relative;overflow:hidden}
.lanes .h{position:absolute;left:0;right:0;height:1px;background:#393d40}
.g{position:absolute;top:0;bottom:0;width:1px;background:#33373a}
.g.beat{background:#484c4f}
.g.bar{background:#66696c}
.event{position:absolute;height:42px;background:#7d7e80f0;border:1px solid #e8e8e8;color:#0d0e0f;font-size:10px;overflow:hidden}
.event span{display:inline-block;background:#8b8d8e;padding:0 5px 0 3px;line-height:17px}
.event.b2 span{background:none;color:#fff}
.event.b2{background:#14152cf2;border-color:#9092a0;border-right:0}
.event.bold span{font-weight:600;font-size:11px}
.event i{position:absolute;height:3px;background:#9799a5}
.event u{position:absolute;width:4px;height:5px;border-radius:2px;background:#58595b}
.event u.big{height:7px}
.hbar{display:flex;height:12px;gap:3px;flex:none}
.hscroll{flex:1;display:flex;align-items:center;background:#434548;padding-left:3px;color:#eee}
.hscroll i{width:28px;height:8px;border-radius:2px;background:#f4f4f4;margin-left:6px}
.hscroll .end{margin-left:auto;margin-right:3px}
.mini{width:12px;height:12px;flex:none;background:#3a3c40;color:#e8e8e8;border-radius:2px}
.hzoom{width:84px;display:flex;align-items:center;justify-content:space-between;background:#34373a;color:#fff;padding:0 2px}
.edmain .hzoom{margin-right:1px}
.hzoom .ic{width:12px;height:12px}
input[type=range]{appearance:none;min-width:0}
.hzoom input{width:52px;height:10px;background:linear-gradient(#66696c,#66696c) center/100% 2px no-repeat}
.hzoom input::-webkit-slider-thumb,.v::-webkit-slider-thumb{appearance:none;width:8px;height:8px;border-radius:50%;background:#fff}
.v{writing-mode:vertical-lr;direction:rtl;width:10px;flex:1;min-height:0;background:linear-gradient(#66696c,#66696c) center/2px 100% no-repeat}
.playhead{position:absolute;top:0;bottom:12px;width:1px;background:#f2f2f2}
.vcol{display:flex;flex-direction:column;gap:3px}
.rulerbtn{height:22px}
.vbox{background:#34373a;border-radius:2px;display:flex;flex-direction:column;align-items:center;color:#eee;padding:3px 0}
.wavezoom{height:48px;padding:5px 0}
.vscroll{flex:1;justify-content:space-between}
.vscroll i{width:6px;flex:1;border-radius:3px;background:#fff;margin:5px 0 8px}
.vzoom{height:84px;margin-bottom:12px}

.lower{border:2px solid #55585b;border-radius:7px;background:#24282c;padding:7px 7px 5px 6px;flex:none}
.ed{overflow:hidden;padding-bottom:7px}
.dim{opacity:.45}
.gapl{margin-left:5px}
.solo{width:16px;height:16px;border-radius:50%;background:#222528;color:#d4d5d6;font-weight:700;line-height:16px}
.dots{width:3px;flex:none;align-self:center;height:15px;background:repeating-linear-gradient(#b3b5b6 0 3px,#0000 3px 6px);margin-left:-2px}
.velgrp{width:100px;align-items:center;padding-left:5px}
.velgrp .b,.ldiv{align-self:stretch}
.ldiv{border-left:1px solid #4c4f52}
.velgrp input{width:30px;flex:1;text-align:center;font-size:13px}
.linkgrp{width:138px}
.linkgrp .sel select{font-size:11px}
.edsnap{width:162px}
.edq{width:193px}
.edsnap .sel{padding-right:0}
.lengrp{width:112px}
.lengrp .sel select{font-size:10px;padding-right:0}
.clipped{width:12px;border-radius:3px 0 0 3px;padding-left:5px;font-size:13px;line-height:25px;margin-left:6px}
.last{margin-left:auto}
.edinfo{height:40px;background:#17191a;text-align:center;line-height:42px;font-size:10px;color:#b3b5b6}
.editor{display:flex}
.edleft{width:67px;margin-right:3px;display:flex;flex-direction:column;flex:none}
.corner{height:25px;background:#1a1c1f;margin-right:-3px}
.keys{height:102px;position:relative;background:#b2b3b4;overflow:hidden}
.keys i{position:absolute;left:38px;right:0;height:1px;background:#222}
.keys i.full{left:0}
.keys u{position:absolute;left:0;width:38px;height:11px;background:#131415}
.keys b{position:absolute;right:8px;bottom:0;font-size:12px;line-height:14px;font-weight:400;color:#111}
.lanelabel{border:1px solid #585b5e;font-size:9px;line-height:14px;font-weight:600;color:#dedede;padding-left:4px}
.lanelabel.one{height:30px;margin-bottom:63px;font-size:8px}
.lanelabel.two{height:30px;margin-bottom:41px}
.laneadd{display:flex;height:12px;gap:1px}
.laneadd button{flex:1;background:#404246}
.edmain{flex:1}
.edmain .ruler{height:25px}
.edmain .ruler i{background:#96989a}
.edmain .ruler .bar{background:#f4f4f4}
.pane{position:relative;background:#323337;overflow:hidden}
.roll{height:101px}
.vel{height:90px}
.cc{height:70px}
.part{position:absolute;top:0;bottom:0;background:#24282b}
.rowdark{position:absolute;height:11px;background:#212427}
.rowline{position:absolute;height:1px;background:#3a3e40}
.psplit{height:3px;background:repeating-linear-gradient(90deg,#eee 0 4px,#222 4px 6px) 741px 0/24px 3px no-repeat,#797b7d;border-bottom:1px solid #222527}
.note{position:absolute;height:11px;background:#bf3a4e;border:1px solid #1b0c0f;color:#f6e2e5;font-size:9px;line-height:10px;padding-left:2px;overflow:hidden}
.vbar{position:absolute;bottom:0;top:20px;width:5px;background:#bf3a4e;border:1px solid #2a1014;border-bottom:0}
.playhead.thick{background:#f4f4f4}
.ev{gap:0}
.ev .updn{height:20px;margin-top:3px;padding:0}
.ev .ezoom{height:78px;margin:3px 0 3px}
.ev .v1{height:90px;justify-content:space-between}
.ev .v2{height:69px;margin-top:3px;justify-content:space-between}
.faint .ic{opacity:.3}

.tabs{display:flex;height:21px;align-items:flex-start;font-weight:600;font-size:10px;color:#dadbdc}
.tabs button{height:23px}
.tabs .x{margin-left:2px}
.tabs .mix{width:66px;margin-left:24px;font-size:11px}
.tabs .active{width:107px;margin:-2px 0 0 18px;height:23px;background:#24282c;border:2px solid #55585b;border-top-color:#24282c;border-radius:0 0 4px 4px;justify-content:space-between;padding:2px 3px 0 20px;color:#fff}
.tabs .smp{margin-left:19px;width:98px}
.tabs .pad{margin-left:40px;width:54px}
.tabs .rem{margin-left:39px;width:78px;font-size:11px}

.media{width:230px;flex:none;display:flex;flex-direction:column}
.mtabs{display:flex;height:24px;padding-left:1px;font-weight:600;color:#dadbdc}
.mtabs button{width:68px;padding-bottom:2px}
.mtabs .active{width:82px;background:#24282c;border:2px solid #55585b;border-bottom:0;border-radius:6px 6px 0 0;margin-bottom:-2px;position:relative;font-size:10px;color:#fff}
.mpanel{flex:1;border:2px solid #55585b;border-radius:7px;margin-top:-2px;background:#24282c;padding:7px 7px 0}
.msearch{display:flex;gap:3px}
.msearch label{flex:1;display:flex;align-items:center;height:20px;background:#17191b;border:1px solid #585b5e;border-radius:3px;padding-left:3px;gap:4px}
.msearch input{width:100%;font-size:11px;font-style:italic;outline:0;appearance:none}
.msearch input::placeholder{color:#8f9193;opacity:1}
.msearch button{width:25px;height:20px;background:#404246;border:1px solid #55585b;border-radius:3px}
.mnav{display:flex;height:31px;gap:3px;align-items:center;border-bottom:1px solid #6f7274}
.mnav button{width:20px}
.mnav .dis{color:#606366}
.tiles{display:grid;grid-template-columns:1fr 1fr;margin:0 -4px;padding:37px 4px 0 0;row-gap:27px}
.tiles button{flex-direction:column;font-size:11px;color:#dedfe0;height:97px;gap:11px}
.tile{width:70px;height:70px;border-radius:3px;background:#a9abad;flex:none;display:block}
.tile svg{display:block;fill:#24282c}
.fx{color:#24282c;font:700 42px/70px "Roboto",sans-serif;text-align:center}

.transport{display:flex;align-items:center;height:40px;gap:5px;padding:0 4px}
.g44{width:44px}
.recmode{width:213px}
.recmode .ldiv{flex:0 0 101px}
.aq{width:38px;font-size:14px}
.loc{width:149px}
.loc.first{margin:0 5px 0 130px;width:150px}
.time{flex:1;text-align:right;white-space:pre;font-size:15px;line-height:25px;padding-right:6px;color:#c9cacb}
.play{display:flex;height:33px;width:275px;flex:none;background:#6d6f71;border:2px solid #dadbdb;border-radius:3px;padding:1px}
.play button{flex:1;color:#ececec}
.play .w50{flex:0 0 50px}
.play .go{background:#35d633;color:#0f3d10}
.w38{width:38px}
.w38 .b{width:38px}
.tempo{width:232px;align-items:stretch}
.tempo input{flex:1;min-width:0;text-align:center;font-size:12px}
.tempo>.ic{align-self:center}
.sig{width:50px;border-left:1px solid #4c4f52;margin-left:3px;text-align:center;line-height:25px;font-size:12px}
.tap{width:50px}
.metrog{width:45px}
.metrog .b{width:22px}
.outmeter{width:90px;height:25px;flex:none;background:#17191b;border:1px solid #585b5e;border-radius:3px;display:flex;align-items:flex-end;padding:1px 4px 1px 26px}
.outmeter i{height:21px;width:1px;flex:none;background:#555;margin-right:5px}
.outmeter .red{width:4px;background:#e01212;margin-right:24px}
.outmeter .cy{width:7px;height:8px;background:#26cfe0;margin-right:1px}
.outmeter .low{height:7px;margin-right:4px}
.outmeter .red:last-child{margin:0}
```
FILE: app.js
```js
const $ = id => document.getElementById(id);
const icon = (name, size = 'md') => `<svg class="ic ${size}"><use href="#${name}"/></svg>`;
const el = (tag, cls, style, text = '') => `<${tag} class="${cls}" style="${style}">${text}</${tag}>`;
const px = o => Object.entries(o).map(([k, v]) => `${k}:${Math.round(v)}px`).join(';');

// Track list: name and the two level-meter heights
const tracks = [
  ['ピアノ', 1, 1], ['サックス', 14, 14], ['クラリネット', 9, 6], ['バスクラリネット', 8, 5],
  ['HALion Sonic 01', 0, 0], ['フルート', 7, 6], ['テューバ', 7, 9]
];
$('tracks').innerHTML = tracks.map(([name, l, r], i) => `
  <div class="track ${i === 4 ? 'sel5' : ''}">
    <span class="col">${icon('piano')}<span class="no">${i + 1}</span></span>
    <div class="tbody">
      <span class="bt"><button>M</button><button>S</button></span><span class="tname">${name}</span>
      <div class="tbtns">
        <span class="bt"><button class="${i === 4 ? 'armed' : ''}" aria-label="録音可能">${icon('rec')}</button><button aria-label="モニター">${icon('speaker')}</button></span>
        <span class="bt"><button class="e">e</button><button aria-label="インストゥルメント">${icon('piano', 'xs')}</button></span>
        <span class="bt"><button>R</button><button>W</button></span>
      </div>
    </div>
    <span class="lvl"><i style="height:${l}px"></i><i style="height:${r}px"></i></span>
  </div>`).join('');

// Project timeline
const BAR = 240, X0 = 9;
const x1 = bar => X0 + (bar - 1) * BAR;
const width1 = $('ruler1').clientWidth;
let ruler = '', grid = '';
for (let s = 0; X0 + s * BAR / 16 < width1; s++) {
  const kind = s % 16 === 0 ? 'bar' : s % 4 === 0 ? 'beat' : '';
  const x = X0 + s * BAR / 16;
  ruler += el('i', kind, px({ left: x }));
  if (s % 2 === 0) grid += el('div', 'g ' + kind, px({ left: x }));
  if (kind === 'bar' && x + 24 < width1) ruler += el('b', '', px({ left: x + 5 }), s / 16 + 1);
}
$('ruler1').innerHTML = ruler + el('span', 'mark', px({ left: X0 - 8 }));
for (let i = 0; i < 8; i++) grid += el('div', 'h', px({ top: 20 + i * 46 }));

const rows = [
  [1, 1.5, 262, 267, 273], [1.5, 2, 255, 262, 267], [2, 2.75, 252, 259, 264], [2.75, 2.875, 262, 273],
  [2.875, 3, 255, 262, 267], [3, 3.25, 249, 255, 262], [3.25, 3.375, 252, 259, 264],
  [3.375, 3.625, 255, 262, 267], [3.625, 3.75, 259, 264, 270], [3.75, 4, 262, 270, 274]
];
const blue = rows.map(([a, b, ...ys]) => ys.map(y =>
  el('i', '', px({ left: (a - 1) * BAR, width: (b - a) * BAR, top: y - 242 }))).join('')).join('');

// Drum-like hits: x from the event start, y inside the event, 1 for a taller mark
const hits = [[165,16],[173,16],[181,18],[241,12,1],[249,12],[256,12],[241,35],[249,35],[256,35],[301,15],
  [346,15],[353,15],[361,6],[361,15],[361,22,1],[376,22,1],[391,22,1],[406,22,1],[422,22,1],[436,22,1],[451,22,1],[466,22,1],
  [422,13,1],[361,35],[391,35],[422,35],[481,12,1],[489,12],[497,12],[481,22,1],[541,15],[586,15],[593,15],[601,6],[601,15],[661,13,1]];
let events = '';
tracks.forEach(([name], i) => {
  const long = i === 4;
  const dots = long ? hits.map(([x, y, big]) => el('u', big ? 'big' : '', px({ left: x - 3, top: y - 2 }))).join('') : '';
  events += el('div', 'event ' + (long ? 'bold' : ''), px({ left: X0, width: BAR * (long ? 3 : 1) + 1, top: 23 + i * 46 }), `<span>${name}</span>${dots}`);
});
events += el('div', 'event b2', px({ left: x1(2) + 1, top: 23 }) + ';right:0', `<span>ピアノ</span>${blue}`);
$('lanes').innerHTML = grid + events;
$('ph1').style.left = '131px';

// Key editor
const EB = 195.5, E0 = 459;
const ex = bar => E0 + (bar - 1) * EB;
const width2 = $('ruler2').clientWidth;
let r2 = '', outer = '', inner = '';
for (let s = 0; E0 + s * EB / 8 < width2; s++) {
  const x = E0 + s * EB / 8;
  const left = px({ left: x });
  const kind = s % 8 === 0 ? 'bar' : s % 2 === 0 ? 'beat' : '';
  if (kind) r2 += el('i', s === 8 ? 'beat' : kind, left);
  if (kind === 'bar' && s !== 8 && x + 24 < width2) r2 += el('b', '', px({ left: x + 5 }), s / 8 + 1);
  if (kind) outer += el('div', 'g ' + kind, left);
  else if (s > 8 && s < 40) inner += el('div', 'g', left);
}
r2 += el('span', 'mark', px({ left: E0 - 8 })) + el('span', 'flag', px({ left: ex(2) }), 'ピアノ') + el('span', 'flag', px({ left: ex(6) - 37 }), 'ピアノ');
$('ruler2').innerHTML = r2;

const part = extra => el('div', 'part', px({ left: ex(2), width: EB * 4 }), extra);
const dark = [4, 26, 59, 81].map(y => el('div', 'rowdark', `left:0;right:0;top:${y}px`)).join('') + el('div', 'rowline', 'left:0;right:0;top:48px');
const noteY = { 'G3': 15, 'F3': 37, 'D#3': 59, 'C3': 92 };
const notes = [['D#3', 2.5, 3], ['F3', 3, 3.75], ['C3', 3, 3.75], ['D#3', 3.875, 4], ['G3', 4, 4.25], ['D#3', 4, 4.25],
  ['F3', 4.25, 4.375], ['C3', 4.25, 4.375], ['D#3', 4.375, 4.625], ['C3', 4.625, 4.75]];
$('roll').innerHTML = part(dark) + outer + inner + notes.map(([n, a, b]) =>
  el('div', 'note', px({ left: ex(a), width: (b - a) * EB + 1, top: noteY[n] }), n)).join('');
$('vel').innerHTML = part('') + outer + inner + [2, 2.5, 3, 3.75, 3.875, 4, 4.25, 4.375, 4.625, 4.75].map(b =>
  el('div', 'vbar', px({ left: ex(b) }))).join('');
$('cc').innerHTML = part('') + outer + inner;
$('ph2').style.left = '558px';

// Piano keys
$('keys').innerHTML = [8, 27, 46, 65, 84].map(y => el('i', y === 46 ? 'full' : '', px({ top: y }))).join('') +
  [2, 23, 59, 80].map(y => el('u', '', px({ top: y }))).join('') + '<b>C3</b>';

// Fader scale and level meter scale
$('fticks').innerHTML = [23, 68, 109, 140, 164, 182, 206, 220, 227, 237].map(y => el('i', '', px({ top: y }))).join('');
$('meter').innerHTML = [[0, 23], [6, 54], [12, 85], [18, 116], [24, 147], [30, 174], [40, 210], [50, 234]].map(([n, y]) =>
  el('span', '', px({ top: y - 6 }), n)).join('');
```
